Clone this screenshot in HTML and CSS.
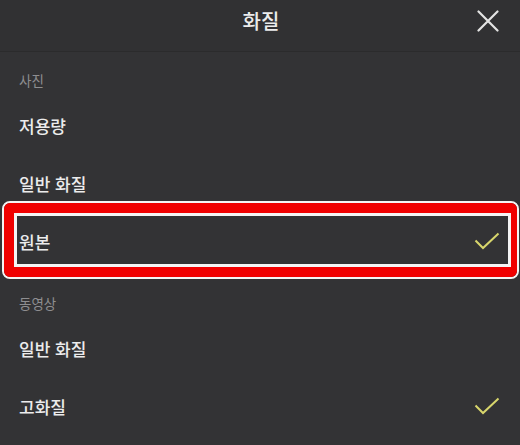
FILE: index.html
```html
<!DOCTYPE html>
<html lang="ko">
<head>
<meta charset="utf-8">
<link rel="stylesheet" href="styles.css">
</head>
<body>
<div class="sheet">
  <header class="bar">
    <h1 class="title">화질</h1>
    <button class="close" aria-label="닫기">
      <svg width="22" height="22" viewBox="0 0 22 22"><path d="M1.5 1.5 L20.5 20.5 M20.5 1.5 L1.5 20.5" stroke="#e4e4e4" stroke-width="2.2" stroke-linecap="round" fill="none"/></svg>
    </button>
  </header>
  <section class="group first">
    <div class="label">사진</div>
    <div class="row">저용량</div>
    <div class="row">일반 화질</div>
    <div class="row selected">
      <span>원본</span>
      <svg class="check" width="26" height="18" viewBox="0 0 26 18"><path d="M1.5 8.5 L9 16 L24.5 1.5" stroke="#d8d66c" stroke-width="2" fill="none"/></svg>
      <div class="mark"><div class="mark-red"><div class="mark-inner"></div></div></div>
    </div>
  </section>
  <section class="group second">
    <div class="label">동영상</div>
    <div class="row">일반 화질</div>
    <div class="row">
      <span>고화질</span>
      <svg class="check" width="26" height="18" viewBox="0 0 26 18"><path d="M1.5 8.5 L9 16 L24.5 1.5" stroke="#d8d66c" stroke-width="2" fill="none"/></svg>
    </div>
  </section>
</div>
</body>
</html>
```

FILE: styles.css
```css
html, body {
  margin: 0;
  padding: 0;
  background: #333335;
}
body {
  width: 520px;
  height: 445px;
  overflow: hidden;
  font-family: "Noto Sans CJK KR", "Noto Sans", sans-serif;
  color: #ececec;
}
.sheet {
  display: flex;
  flex-direction: column;
}
.bar {
  height: 51px;
  border-bottom: 1px solid #2b2b2c;
  background: #313133;
  display: flex;
  align-items: center;
  justify-content: center;
  position: relative;
}
.title {
  margin: 0;
  font-size: 20px;
  font-weight: 500;
  color: #ececec;
  line-height: 1;
  margin-left: 2px;
  margin-top: -10px;
}
.close {
  position: absolute;
  right: 21px;
  top: 10px;
  background: none;
  border: 0;
  padding: 0;
  width: 22px;
  height: 22px;
  display: flex;
}
.group {
  display: flex;
  flex-direction: column;
}
.label {
  font-size: 13.5px;
  line-height: 16px;
  color: #8e8e90;
  padding: 20px 19px 8px;
}
.second .label {
  padding-top: 25px;
}
.row {
  height: 58px;
  display: flex;
  align-items: center;
  justify-content: space-between;
  padding: 0 19px 0 19px;
  font-size: 17px;
  font-weight: 500;
  color: #ececec;
  position: relative;
}
.check {
  margin-right: 1px;
  margin-top: -1px;
}
.mark {
  position: absolute;
  top: -11px;
  bottom: -9px;
  left: 2px;
  right: 1px;
  border: 2px solid #f4f4f4;
  border-radius: 8px;
  display: flex;
}
.mark-red {
  flex: 1;
  display: flex;
  border-style: solid;
  border-color: #f00000;
  border-width: 10px 6px 10px 10px;
  border-radius: 6px;
}
.mark-inner {
  flex: 1;
  border: 3px solid #f4f4f4;
}
```
